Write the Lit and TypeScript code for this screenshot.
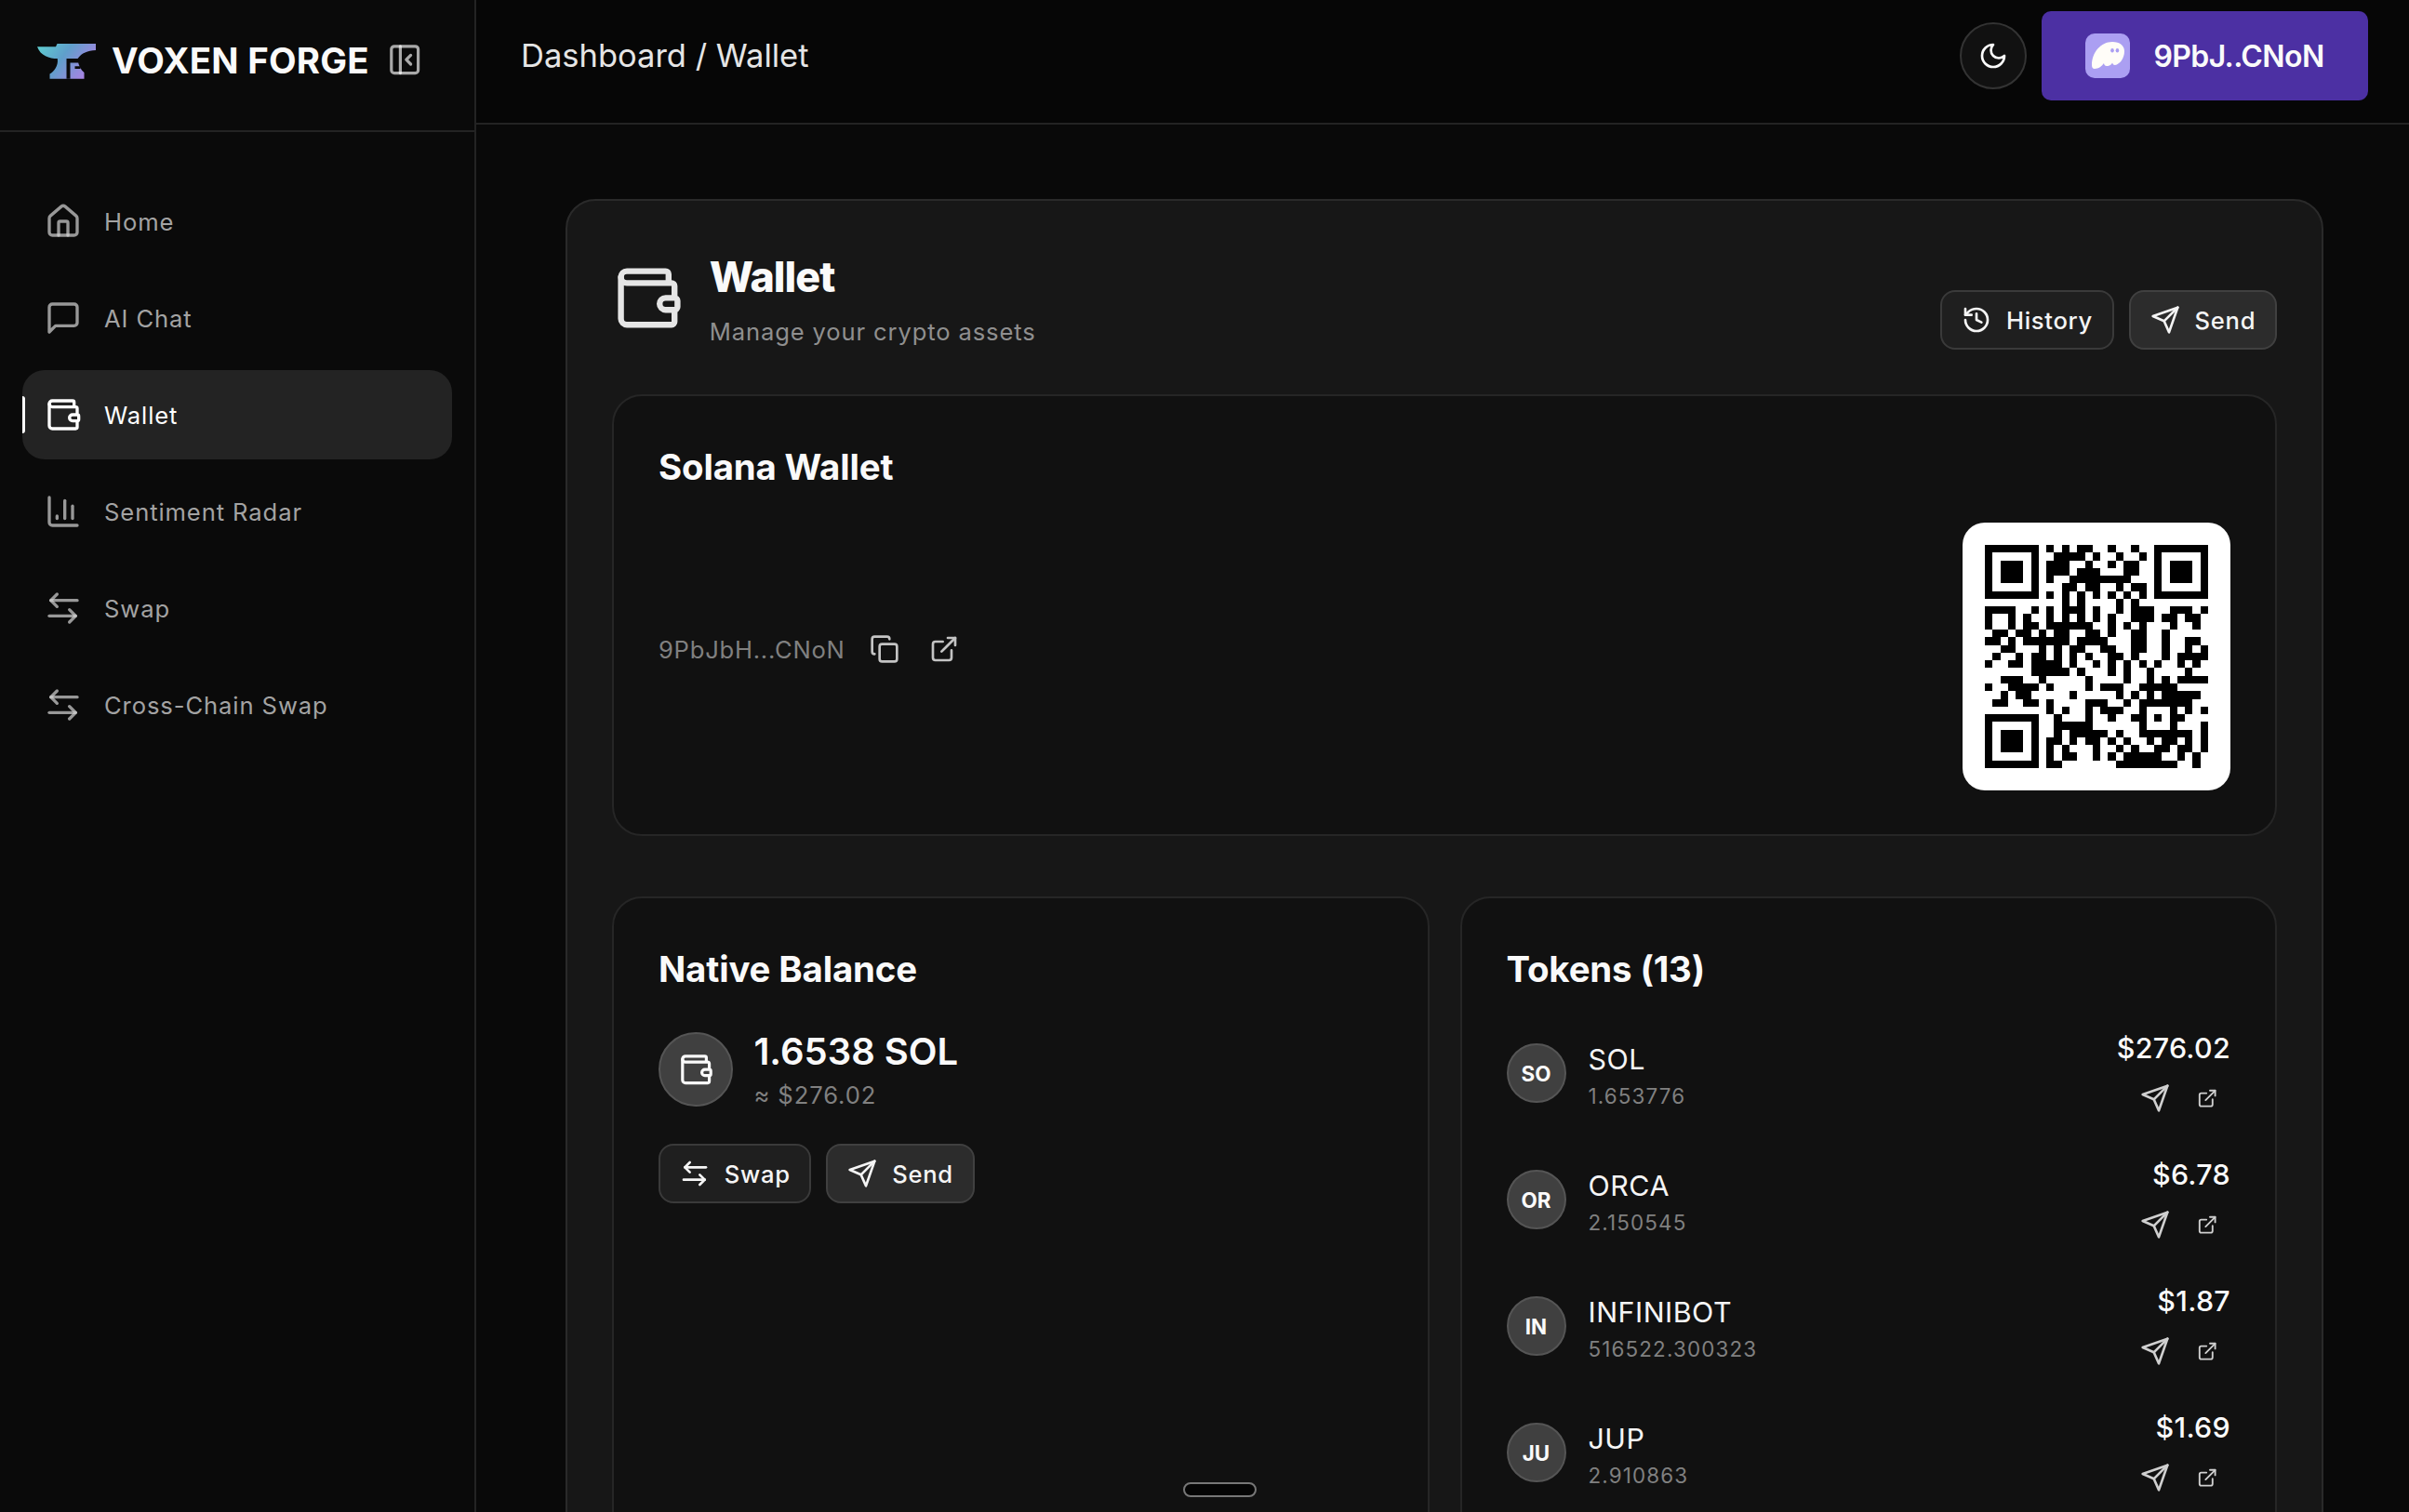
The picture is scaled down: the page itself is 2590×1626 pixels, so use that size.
import { LitElement, html, css, svg } from 'lit';
import { customElement } from 'lit/decorators.js';

// lucide-style strokes, 24 unit box
const paths = {
  home: svg`<path d="M15 21v-8a1 1 0 0 0-1-1h-4a1 1 0 0 0-1 1v8"/><path d="M3 10a2 2 0 0 1 .709-1.528l7-5.999a2 2 0 0 1 2.582 0l7 5.999A2 2 0 0 1 21 10v9a2 2 0 0 1-2 2H5a2 2 0 0 1-2-2z"/>`,
  chat: svg`<path d="M21 15a2 2 0 0 1-2 2H7l-4 4V5a2 2 0 0 1 2-2h14a2 2 0 0 1 2 2z"/>`,
  wallet: svg`<path d="M19 7V4a1 1 0 0 0-1-1H5a2 2 0 0 0 0 4h15a1 1 0 0 1 1 1v4h-3a2 2 0 0 0 0 4h3a1 1 0 0 0 1-1v-2a1 1 0 0 0-1-1"/><path d="M3 5v14a2 2 0 0 0 2 2h15a1 1 0 0 0 1-1v-4"/>`,
  chart: svg`<path d="M3 3v16a2 2 0 0 0 2 2h16"/><path d="M8 16.5V15"/><path d="M13 16.5V5"/><path d="M18 16.5V8.5"/>`,
  swap: svg`<path d="M21 7H4"/><path d="M8 3 4 7l4 4"/><path d="M3 17h17"/><path d="m16 13 4 4-4 4"/>`,
  copy: svg`<rect x="8" y="8" width="14" height="14" rx="2"/><path d="M4 16c-1.1 0-2-.9-2-2V4c0-1.1.9-2 2-2h10c1.1 0 2 .9 2 2"/>`,
  external: svg`<path d="M15 3h6v6"/><path d="M10 14 21 3"/><path d="M18 13v6a2 2 0 0 1-2 2H5a2 2 0 0 1-2-2V8a2 2 0 0 1 2-2h6"/>`,
  send: svg`<path d="m22 2-7 20-4-9-9-4Z"/><path d="M22 2 11 13"/>`,
  history: svg`<path d="M3 12a9 9 0 1 0 9-9 9.75 9.75 0 0 0-6.74 2.74L3 8"/><path d="M3 3v5h5"/><path d="M12 7v5l4 2"/>`,
  moon: svg`<path d="M12 3a6 6 0 0 0 9 9 9 9 0 1 1-9-9Z"/>`,
  panel: svg`<rect x="3" y="3" width="18" height="18" rx="2"/><path d="M9 3v18"/><path d="m16 15-3-3 3-3"/>`,
};

type IconName = keyof typeof paths;

const icon = (name: IconName, cls = 'i32') =>
  html`<svg class="icon ${cls}" viewBox="0 0 24 24" fill="none" stroke="currentColor" stroke-width="2" stroke-linecap="round" stroke-linejoin="round">${paths[name]}</svg>`;

const NAV: { label: string; icon: IconName; active?: boolean }[] = [
  { label: 'Home', icon: 'home' },
  { label: 'AI Chat', icon: 'chat' },
  { label: 'Wallet', icon: 'wallet', active: true },
  { label: 'Sentiment Radar', icon: 'chart' },
  { label: 'Swap', icon: 'swap' },
  { label: 'Cross-Chain Swap', icon: 'swap' },
];

const TOKENS = [
  { sym: 'SOL', badge: 'SO', amount: '1.653776', value: '$276.02' },
  { sym: 'ORCA', badge: 'OR', amount: '2.150545', value: '$6.78' },
  { sym: 'INFINIBOT', badge: 'IN', amount: '516522.300323', value: '$1.87' },
  { sym: 'JUP', badge: 'JU', amount: '2.910863', value: '$1.69' },
];

// dark modules per row, finder squares are added in code
const QR_ROWS: number[][] = [
  [8, 10, 12, 13, 16, 19],
  [9, 10, 11, 12, 14, 17, 20],
  [8, 9, 10, 13, 16, 18, 19],
  [8, 9, 10, 12, 13, 14, 18, 19],
  [8, 11, 12, 13, 14, 15, 16, 17, 18],
  [10, 11, 13, 14, 17, 19, 20],
  [8, 10, 12, 14, 16, 18, 20],
  [10, 12, 17, 19],
  [0, 1, 2, 3, 6, 8, 10, 11, 12, 14, 17, 19, 20, 21, 24, 25, 26, 28],
  [0, 3, 5, 8, 10, 12, 14, 16, 19, 20, 21, 23, 24, 26, 27],
  [0, 3, 5, 6, 8, 9, 10, 11, 12, 13, 16, 18, 20, 24, 27],
  [1, 2, 4, 5, 7, 9, 10, 13, 14, 16, 19, 20, 23],
  [0, 1, 3, 5, 6, 7, 8, 9, 10, 12, 13, 14, 15, 19, 20, 23, 26, 27],
  [2, 3, 7, 9, 11, 12, 15, 16, 19, 20, 23, 26, 28],
  [1, 4, 6, 7, 9, 11, 13, 16, 17, 19, 23, 25, 26, 27, 28],
  [0, 3, 4, 6, 7, 8, 9, 11, 14, 16, 18, 20, 22, 25, 27],
  [6, 7, 8, 9, 10, 12, 16, 18, 21, 26],
  [2, 3, 4, 7, 13, 18, 21, 23, 25, 26, 27, 28],
  [0, 3, 4, 5, 6, 8, 13, 15, 16, 17, 20, 21, 22, 23, 24],
  [2, 4, 5, 11, 17, 19, 21, 23, 24, 25, 26, 27],
  [1, 2, 5, 6, 8, 13, 14, 15, 18, 20, 21, 22, 23, 24, 25, 26],
  [8, 10, 13, 15, 16, 17, 20, 24, 26, 28],
  [9, 13, 16, 19, 20, 22, 24, 25],
  [9, 10, 11, 12, 13, 20, 24, 28],
  [9, 11, 12, 13, 14, 15, 17, 20, 21, 22, 23, 24, 25, 26, 28],
  [8, 9, 11, 13, 14, 16, 18, 21, 23, 24, 26, 28],
  [8, 10, 14, 17, 19, 22, 23, 25, 26, 28],
  [8, 10, 11, 14, 16, 18, 19, 20, 21, 22, 25, 27],
  [8, 9, 17, 18, 19, 20, 21, 22, 23, 24, 27],
];

const qrPath = () => {
  let d = '';
  QR_ROWS.forEach((cols, r) => cols.forEach((c) => (d += `M${c} ${r}h1v1h-1z`)));
  // finders: outer ring with evenodd hole, then the 3x3 core
  for (const [x, y] of [[0, 0], [22, 0], [0, 22]]) {
    d += `M${x} ${y}h7v7h-7z M${x + 1} ${y + 1}v5h5v-5z M${x + 2} ${y + 2}h3v3h-3z`;
  }
  return d;
};

@customElement('app-root')
export class AppRoot extends LitElement {
  static styles = css`
    :host {
      display: block;
      font-family: 'Inter', 'Liberation Sans', sans-serif;
      color: #fafafa;
    }
    .app {
      position: relative;
      display: grid;
      grid-template-columns: 512px 1fr;
      height: 1626px;
      overflow: hidden;
      background: #090909;
    }
    .icon {
      display: block;
      flex: none;
    }
    .i40 { width: 40px; height: 40px; }
    .i38 { width: 38.4px; height: 38.4px; }
    .i32 { width: 32px; height: 32px; }
    .i22 { width: 22.4px; height: 22.4px; }
    .i77 { width: 76.8px; height: 76.8px; }

    /* sidebar */
    .sidebar {
      background: #0a0a0a;
      border-right: 2px solid #232323;
    }
    .brand {
      height: 140px;
      box-sizing: content-box;
      border-bottom: 2px solid #232323;
      display: flex;
      align-items: flex-start;
      padding-left: 40px;
    }
    .logo {
      width: 63px;
      height: 38px;
      margin-top: 47px;
      flex: none;
    }
    .brand-name {
      font-size: 38.4px;
      line-height: 38px;
      font-weight: 700;
      letter-spacing: 0.25px;
      margin: 46px 0 0 17px;
      white-space: nowrap;
    }
    .toggle {
      margin: 45px 0 0 19px;
      color: #fff;
      stroke-opacity: 0.65;
    }
    .nav {
      display: flex;
      flex-direction: column;
      gap: 8px;
      padding: 48px 24px;
    }
    .nav-item {
      position: relative;
      display: flex;
      align-items: center;
      gap: 24px;
      height: 96px;
      padding-left: 24px;
      border-radius: 24px;
      font-size: 25.6px;
      letter-spacing: 0.9px;
      color: #a3a3a3;
    }
    .nav-item .icon {
      stroke-opacity: 0.7;
      color: #d4d4d4;
    }
    .nav-item.active {
      background: #232323;
      color: #fff;
    }
    .nav-item.active .icon {
      stroke-opacity: 1;
      color: #fff;
    }
    .nav-item.active::before {
      content: '';
      position: absolute;
      left: 0;
      top: 28px;
      width: 3.2px;
      height: 40px;
      background: #fff;
      border-radius: 0 3px 3px 0;
    }

    /* top bar */
    .main {
      min-width: 0;
    }
    .topbar {
      height: 134px;
      box-sizing: border-box;
      border-bottom: 2px solid #232323;
      background: #060606;
      display: flex;
      align-items: flex-start;
      padding: 12px 44px 0 48px;
    }
    .crumb {
      font-size: 34.5px;
      line-height: 96px;
      color: #e5e5e5;
      flex: 1;
    }
    .theme {
      width: 72px;
      height: 72px;
      box-sizing: border-box;
      border: 2px solid #333;
      border-radius: 50%;
      background: #111;
      display: flex;
      align-items: center;
      justify-content: center;
      margin: 12px 16px 0 0;
    }
    .connect {
      width: 351px;
      height: 96px;
      background: #4c30a3;
      border-radius: 10px;
      display: flex;
      align-items: center;
      justify-content: center;
      gap: 25px;
      font-size: 32px;
      font-weight: 600;
      letter-spacing: -0.6px;
    }
    .phantom {
      width: 48px;
      height: 48px;
      flex: none;
    }

    /* wallet page */
    .content {
      padding: 80px 92px 0 96px;
    }
    .panel {
      background: #171717;
      border: 2px solid #2a2a2a;
      border-radius: 32px;
      padding: 54px 48px 300px;
    }
    .panel-head {
      display: flex;
      align-items: flex-end;
      margin-bottom: 48px;
    }
    .panel-head > .icon {
      align-self: flex-start;
      margin: 12px 28px 0 0;
      color: #e5e5e5;
    }
    .head-text {
      flex: 1;
    }
    h1 {
      margin: 0;
      font-size: 44.8px;
      line-height: 56px;
      font-weight: 800;
      letter-spacing: -1px;
    }
    .sub {
      margin-top: 12px;
      font-size: 25.6px;
      line-height: 38px;
      letter-spacing: 0.86px;
      color: #8f8f8f;
    }
    .btns {
      display: flex;
      gap: 16px;
    }
    .btn {
      display: flex;
      align-items: center;
      gap: 16px;
      height: 64px;
      box-sizing: border-box;
      padding: 0 20.8px;
      border: 2px solid #3a3a3a;
      border-radius: 16px;
      background: #1f1f1f;
      font-size: 25.6px;
      letter-spacing: 0.7px;
      font-weight: 500;
      color: #f5f5f5;
    }
    .btn.alt {
      background: #2c2c2c;
      border-color: #404040;
    }
    .card {
      background: #111;
      border: 2px solid #262626;
      border-radius: 32px;
      padding: 48px;
    }
    h2 {
      margin: 0;
      font-size: 38.4px;
      line-height: 57px;
      font-weight: 700;
      letter-spacing: -0.15px;
    }
    .addr-row {
      display: flex;
      align-items: center;
      justify-content: space-between;
      margin: 31px 0 -1px;
    }
    .addr {
      display: flex;
      align-items: center;
      gap: 26px;
      margin-bottom: 16px;
      font-size: 25.6px;
      letter-spacing: 0.75px;
      color: #808080;
    }
    .addr-icons {
      display: flex;
      gap: 32px;
      color: #c4c4c4;
    }
    .qr {
      width: 288px;
      height: 288px;
      box-sizing: border-box;
      padding: 24px;
      background: #fff;
      border-radius: 24px;
    }
    .qr svg {
      display: block;
      width: 240px;
      height: 240px;
    }
    .lower {
      display: grid;
      grid-template-columns: 1fr 1fr;
      gap: 33px;
      margin-top: 65px;
    }
    .balance {
      display: flex;
      gap: 22.4px;
      margin-top: 36px;
    }
    .coin {
      width: 80px;
      height: 80px;
      box-sizing: border-box;
      margin-top: 3px;
      border: 2px solid #555;
      border-radius: 50%;
      background: #404040;
      display: flex;
      align-items: center;
      justify-content: center;
      flex: none;
    }
    .coin .icon {
      width: 38.4px;
      height: 38.4px;
    }
    .amount {
      font-size: 40px;
      line-height: 48px;
      font-weight: 600;
    }
    .usd {
      font-size: 25.6px;
      line-height: 42px;
      letter-spacing: 0.9px;
      margin-top: 2px;
      color: #808080;
    }
    .balance-btns {
      margin-top: 31px;
    }
    .tokens {
      display: flex;
      flex-direction: column;
      gap: 38px;
      margin-top: 34px;
    }
    .token {
      display: flex;
      align-items: center;
      height: 98px;
    }
    .badge {
      width: 64px;
      height: 64px;
      box-sizing: border-box;
      border: 2px solid #555;
      border-radius: 50%;
      background: #404040;
      display: flex;
      align-items: center;
      justify-content: center;
      font-size: 22.4px;
      font-weight: 700;
      margin-right: 24px;
      flex: none;
    }
    .token-info {
      flex: 1;
      margin-top: 5px;
    }
    .sym {
      font-size: 30.4px;
      line-height: 44px;
      letter-spacing: 0.5px;
      color: #f5f5f5;
    }
    .qty {
      font-size: 22.4px;
      line-height: 36px;
      letter-spacing: 1.15px;
      color: #808080;
    }
    .token-side {
      align-self: flex-start;
      display: flex;
      flex-direction: column;
      align-items: flex-end;
    }
    .value {
      font-size: 30.4px;
      line-height: 44px;
      letter-spacing: 0.3px;
      font-weight: 500;
    }
    .token-actions {
      display: flex;
      align-items: center;
      gap: 29px;
      margin-top: 16px;
      padding-right: 13.5px;
      color: #d0d0d0;
    }
    .scroll-pill {
      position: absolute;
      left: 1272px;
      top: 1594px;
      width: 79px;
      height: 16px;
      box-sizing: border-box;
      border: 2px solid #777;
      border-radius: 8px;
      background: #050505;
    }
  `;

  private renderLogo() {
    return html`<svg class="logo" viewBox="0 0 63 38">
      <defs>
        <linearGradient id="forge" x1="0" y1="0" x2="1" y2="0.45">
          <stop offset="0" stop-color="#5fd0cf"></stop>
          <stop offset="0.5" stop-color="#5f9fcb"></stop>
          <stop offset="1" stop-color="#a585e2"></stop>
        </linearGradient>
      </defs>
      <path fill="url(#forge)" d="M0 3.2H20L21.5 0H63V7C54 7.4 48 10 43.5 16C44 23 47 28 50.5 31V37.8H13.5V32.5C18 30 23 24 21.8 16C13 16 3.5 13 0 3.2Z"></path>
      <path fill="#0a0a0a" d="M31.5 16H44.5V20.5H35.5V37.8H31.5ZM40.5 24.3H46.5V27H40.5Z"></path>
    </svg>`;
  }

  private renderPhantom() {
    return html`<svg class="phantom" viewBox="0 0 48 48">
      <rect width="48" height="48" rx="10" fill="#ab9ff2"></rect>
      <path fill="#fffdf8" d="M7 34C7 20 17 9 29 9C37 9 42 13 42 19C42 27 37 33 32 34C30 34 29.5 32.5 29 31.5C28 34 25 35.5 23 35C21 35 20 33 20 32C18 35 14 38 10 38C8 38 7 36.5 7 34Z"></path>
      <ellipse cx="29" cy="18.3" rx="1.8" ry="2.3" fill="#ab9ff2"></ellipse>
      <ellipse cx="34.4" cy="18.3" rx="1.8" ry="2.3" fill="#ab9ff2"></ellipse>
    </svg>`;
  }

  private renderSidebar() {
    return html`<aside class="sidebar">
      <div class="brand">
        ${this.renderLogo()}
        <span class="brand-name">VOXEN FORGE</span>
        ${icon('panel', 'i38 toggle')}
      </div>
      <nav class="nav">
        ${NAV.map(
          (n) => html`<div class="nav-item ${n.active ? 'active' : ''}">
            ${icon(n.icon, 'i40')}<span>${n.label}</span>
          </div>`
        )}
      </nav>
    </aside>`;
  }

  private renderToken(t: (typeof TOKENS)[number]) {
    return html`<div class="token">
      <div class="badge">${t.badge}</div>
      <div class="token-info">
        <div class="sym">${t.sym}</div>
        <div class="qty">${t.amount}</div>
      </div>
      <div class="token-side">
        <div class="value">${t.value}</div>
        <div class="token-actions">${icon('send')}${icon('external', 'i22')}</div>
      </div>
    </div>`;
  }

  render() {
    return html`<div class="app">
      ${this.renderSidebar()}
      <div class="main">
        <header class="topbar">
          <div class="crumb">Dashboard / Wallet</div>
          <div class="theme">${icon('moon')}</div>
          <div class="connect">${this.renderPhantom()}<span>9PbJ..CNoN</span></div>
        </header>
        <div class="content">
          <section class="panel">
            <div class="panel-head">
              ${icon('wallet', 'i77')}
              <div class="head-text">
                <h1>Wallet</h1>
                <div class="sub">Manage your crypto assets</div>
              </div>
              <div class="btns">
                <div class="btn">${icon('history')}History</div>
                <div class="btn alt">${icon('send')}Send</div>
              </div>
            </div>
            <div class="card">
              <h2>Solana Wallet</h2>
              <div class="addr-row">
                <div class="addr">
                  <span>9PbJbH...CNoN</span>
                  <div class="addr-icons">${icon('copy')}${icon('external')}</div>
                </div>
                <div class="qr">
                  <svg viewBox="0 0 29 29" shape-rendering="crispEdges">
                    <path fill="#000" fill-rule="evenodd" d=${qrPath()}></path>
                  </svg>
                </div>
              </div>
            </div>
            <div class="lower">
              <div class="card">
                <h2>Native Balance</h2>
                <div class="balance">
                  <div class="coin">${icon('wallet')}</div>
                  <div>
                    <div class="amount">1.6538 SOL</div>
                    <div class="usd">≈ $276.02</div>
                  </div>
                </div>
                <div class="btns balance-btns">
                  <div class="btn">${icon('swap')}Swap</div>
                  <div class="btn alt">${icon('send')}Send</div>
                </div>
              </div>
              <div class="card">
                <h2>Tokens (13)</h2>
                <div class="tokens">${TOKENS.map((t) => this.renderToken(t))}</div>
              </div>
            </div>
          </section>
        </div>
      </div>
      <div class="scroll-pill"></div>
    </div>`;
  }
}
